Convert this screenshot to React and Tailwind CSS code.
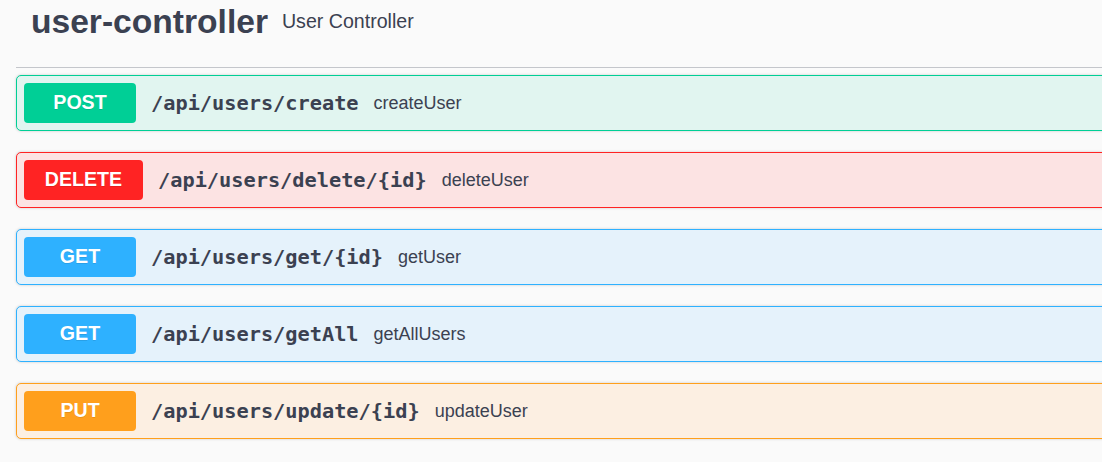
import React from "react";

const ops = [
  { m: "POST", path: "/api/users/create", desc: "createUser", border: "border-[#00cf96]", bg: "bg-[#e1f5f0]", badge: "bg-[#00cf96]", w: "w-[112px]" },
  { m: "DELETE", path: "/api/users/delete/{id}", desc: "deleteUser", border: "border-[#ff2323]", bg: "bg-[#fce3e3]", badge: "bg-[#ff2323]", w: "w-[119px]" },
  { m: "GET", path: "/api/users/get/{id}", desc: "getUser", border: "border-[#2eb1ff]", bg: "bg-[#e5f2fb]", badge: "bg-[#2eb1ff]", w: "w-[112px]" },
  { m: "GET", path: "/api/users/getAll", desc: "getAllUsers", border: "border-[#2eb1ff]", bg: "bg-[#e5f2fb]", badge: "bg-[#2eb1ff]", w: "w-[112px]" },
  { m: "PUT", path: "/api/users/update/{id}", desc: "updateUser", border: "border-[#ff9f1c]", bg: "bg-[#fcefe2]", badge: "bg-[#ff9f1c]", w: "w-[112px]" },
];

export default function App() {
  return (
    <div className="w-[1102px] h-[462px] overflow-hidden bg-[#fafafa] text-[#3b4151]" style={{ fontFamily: '"Liberation Sans", Arial, sans-serif' }}>
      <div className="ml-[16px] w-[1200px]">
        <div className="h-[68px] border-b border-[#c4c6cb] pl-[15px]">
          <div className="flex items-center h-[43px]">
            <span className="text-[33.6px] font-bold leading-none">user-controller</span>
            <span className="text-[19.6px] leading-none pl-[14px]">User Controller</span>
          </div>
        </div>
        <div className="pt-[7px] flex flex-col gap-[21px]">
          {ops.map((o, i) => (
            <div key={i} className={`h-[56px] border ${o.border} ${o.bg} rounded-[5px] shadow-[0_0_3px_rgba(0,0,0,0.19)] p-[7px] flex items-center`}>
              <div className={`${o.badge} ${o.w} h-[40px] rounded-[4px] flex items-center justify-center text-white font-bold text-[19.6px] [text-shadow:0_1px_0_rgba(0,0,0,0.1)]`}>
                {o.m}
              </div>
              <span className="pl-[15px] text-[20.3px] font-bold text-[#3b4151]" style={{ fontFamily: '"DejaVu Sans Mono", monospace' }}>
                {o.path}
              </span>
              <span className="pl-[15px] text-[18px] text-[#3b4151]">{o.desc}</span>
            </div>
          ))}
        </div>
      </div>
    </div>
  );
}
